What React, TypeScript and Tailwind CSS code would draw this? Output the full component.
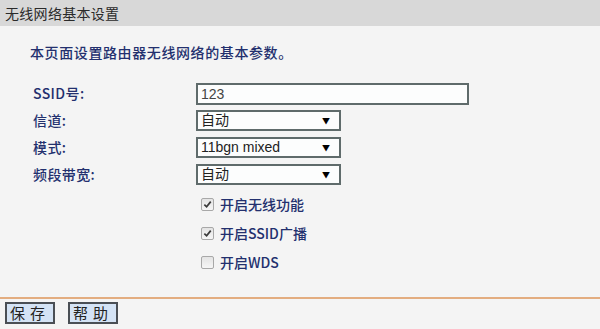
import { Fragment } from "react";

const FONT = {
  fontFamily: '"Noto Sans CJK SC", "Liberation Sans", sans-serif',
};

const fields = [
  { label: "SSID号:", kind: "input", value: "123" },
  { label: "信道:", kind: "select", value: "自动" },
  { label: "模式:", kind: "select", value: "11bgn mixed" },
  { label: "频段带宽:", kind: "select", value: "自动" },
];

const options = [
  { label: "开启无线功能", checked: true },
  { label: "开启SSID广播", checked: true },
  { label: "开启WDS", checked: false },
];

function CheckBox({ checked }: { checked: boolean }) {
  return (
    <span className="flex h-[13px] w-[13px] items-center justify-center rounded-[2px] border border-[#a8a8a8] bg-gradient-to-b from-[#e4e4e4] to-[#f6f6f6]">
      {checked && (
        <svg viewBox="0 0 10 10" className="h-[9px] w-[9px]">
          <path d="M1.5 5.2 L4 7.6 L8.6 1.8" fill="none" stroke="#3a3a3a" strokeWidth="1.9" />
        </svg>
      )}
    </span>
  );
}

export default function App() {
  return (
    <div className="flex h-[329px] w-[600px] flex-col bg-[#f4f4f4] text-[14px]" style={FONT}>
      <div className="flex h-[26px] items-center bg-[#d8d8d8] pl-[5px] text-[14px] tracking-[0.3px] text-[#2a2a2a]">
        无线网络基本设置
      </div>

      <p className="mt-[15px] pl-[30px] text-[14px] font-medium leading-[22px] tracking-[0.6px] text-[#23306e]">
        本页面设置路由器无线网络的基本参数。
      </p>

      <div className="mt-[20px] grid grid-cols-[163px_1fr] pl-[33px] font-medium text-[#23306e]">
        {fields.map((f) => (
          <Fragment key={f.label}>
            <div className="flex h-[27px] items-center pb-[6px] tracking-[0.4px]">{f.label}</div>
            <div className="flex h-[27px] items-start">
              {f.kind === "input" ? (
                <div className="flex h-[22px] w-[273px] items-center border-2 border-[#5f6b6b] bg-[#fcfdfd] pl-[3px] text-[14px] font-normal text-[#444]" style={{ fontFamily: '"Liberation Sans", sans-serif' }}>
                  {f.value}
                </div>
              ) : (
                <div className="flex h-[21px] w-[145px] items-center justify-between border-2 border-[#5f6b6b] bg-[#fcfdfd] pl-[3px] pr-[9px] text-[14px] font-normal text-[#222]">
                  <span style={{ fontFamily: '"Liberation Sans", "Noto Sans CJK SC", sans-serif' }}>{f.value}</span>
                  <span className="text-[8px] leading-none text-black">▼</span>
                </div>
              )}
            </div>
          </Fragment>
        ))}
      </div>

      <div className="mt-[4px] flex flex-col gap-[11px] pl-[201px] font-medium text-[#23306e]">
        {options.map((o) => (
          <div key={o.label} className="flex h-[18px] items-center gap-[6px]">
            <CheckBox checked={o.checked} />
            <span>{o.label}</span>
          </div>
        ))}
      </div>

      <div className="mt-auto border-t-2 border-[#e3ad80]" />
      <div className="flex gap-[13px] px-[5px] pb-[5px] pt-[3px]">
        <button className="h-[22px] w-[50px] border-2 border-[#4a4f55] bg-[#d4e3f5] text-[15px] leading-[16px] tracking-[5px] text-[#222]">
          保存
        </button>
        <button className="h-[22px] w-[50px] border-2 border-[#4a4f55] bg-[#d4e3f5] text-[15px] leading-[16px] tracking-[5px] text-[#222]">
          帮助
        </button>
      </div>
    </div>
  );
}
